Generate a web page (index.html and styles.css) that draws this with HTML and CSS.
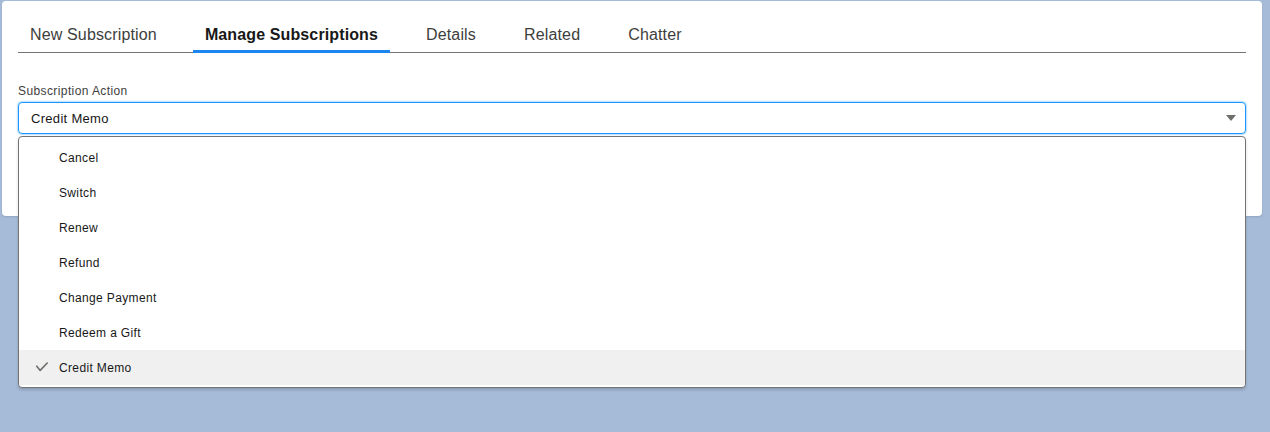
FILE: index.html
```html
<!DOCTYPE html>
<html lang="en">
<head>
<meta charset="utf-8">
<title>Manage Subscriptions</title>
<link rel="stylesheet" href="styles.css">
</head>
<body>
<div class="card">
  <nav class="tabs">
    <div class="tab">New Subscription</div>
    <div class="tab active">Manage Subscriptions</div>
    <div class="tab">Details</div>
    <div class="tab">Related</div>
    <div class="tab">Chatter</div>
  </nav>
  <div class="form">
    <label class="label">Subscription Action</label>
    <div class="combo">
      <div class="select">
        <span class="value">Credit Memo</span>
        <svg class="arrow" width="10" height="6" viewBox="0 0 10 6"><path d="M0 0 H10 L5 6 Z" fill="#706e6b"/></svg>
      </div>
      <ul class="menu">
        <li class="item">Cancel</li>
        <li class="item">Switch</li>
        <li class="item">Renew</li>
        <li class="item">Refund</li>
        <li class="item">Change Payment</li>
        <li class="item">Redeem a Gift</li>
        <li class="item selected"><svg class="check" width="12" height="10" viewBox="0 0 12 10"><path d="M0.8 4.2 L4.2 8.4 L11.2 1" fill="none" stroke="#706e6b" stroke-width="1.6" stroke-linecap="round" stroke-linejoin="round"/></svg>Credit Memo</li>
      </ul>
    </div>
  </div>
</div>
</body>
</html>
```

FILE: styles.css
```css
* { box-sizing: border-box; }
html, body {
  margin: 0;
  padding: 0;
  background: #a6bbd8;
  height: 432px;
  overflow: hidden;
  font-family: "Liberation Sans", Arial, sans-serif;
}
.card {
  margin: 1px 8px 0 2px;
  width: 1260px;
  height: 215px;
  background: #fff;
  border-radius: 4px;
  box-shadow: 0 1px 2px rgba(0,0,0,0.12);
  padding: 18px 16px 0 16px;
}
.tabs {
  display: flex;
  gap: 24px;
  border-bottom: 1px solid #747474;
}
.tab {
  height: 34px;
  line-height: 31px;
  padding: 0 12px;
  margin-bottom: -1px;
  border-bottom: 3px solid transparent;
  font-size: 16px;
  letter-spacing: 0.15px;
  color: #3e3e3c;
  white-space: nowrap;
}
.tab.active {
  font-weight: 700;
  color: #181818;
  letter-spacing: 0.12px;
  border-bottom-color: #1b86f0;
}
.form {
  padding-top: 31px;
}
.label {
  display: block;
  font-size: 12px;
  line-height: 15px;
  letter-spacing: 0.4px;
  color: #3e3e3c;
  margin-bottom: 3px;
}
.combo {
  position: relative;
}
.select {
  height: 32px;
  border: 1px solid #1b96ff;
  border-radius: 4px;
  box-shadow: 0 0 2px #1b96ff;
  display: flex;
  align-items: center;
  justify-content: space-between;
  padding: 0 9px 0 12px;
}
.value {
  font-size: 13px;
  letter-spacing: 0.3px;
  color: #181818;
}
.arrow { display: block; }
.menu {
  position: absolute;
  left: 0;
  right: 0;
  top: 34px;
  margin: 0;
  padding: 3px 0 2px;
  list-style: none;
  background: #fff;
  border: 1px solid #747474;
  border-radius: 4px;
  box-shadow: 0 2px 3px rgba(0,0,0,0.16);
}
.item {
  height: 35px;
  display: flex;
  align-items: center;
  padding-left: 40px;
  font-size: 12px;
  letter-spacing: 0.35px;
  color: #181818;
  position: relative;
}
.item.selected {
  background: #f0f0f0;
}
.check {
  position: absolute;
  left: 17px;
  top: 12px;
}
```
